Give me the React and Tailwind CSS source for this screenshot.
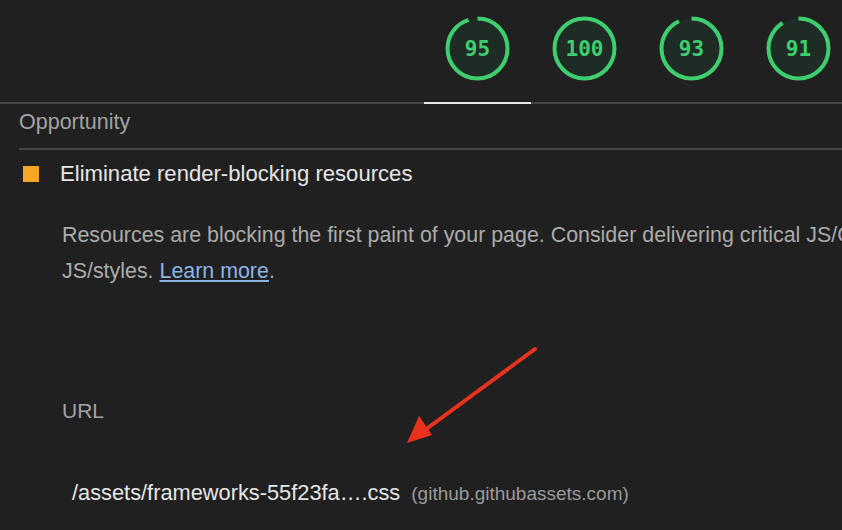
import React from "react";

const scores = [95, 100, 93, 91];

const Gauge = ({ value }) => {
  const r = 30;
  const c = 2 * Math.PI * r;
  const len = (value / 100) * c;
  return (
    <div className="relative w-[65px] h-[65px]">
      <svg width="65" height="65" viewBox="0 0 65 65" className="absolute inset-0">
        <circle cx="32.5" cy="32.5" r={r} fill="#0cce6b" fillOpacity="0.07" />
        <circle
          cx="32.5"
          cy="32.5"
          r={r}
          fill="none"
          stroke="#3fce6f"
          strokeWidth="4"
          strokeDasharray={`${len} ${c}`}
          transform="rotate(-90 32.5 32.5)"
        />
      </svg>
      <div className="absolute inset-0 flex items-center justify-center pt-[2px] font-['DejaVu_Sans_Mono',monospace] font-bold text-[21px] text-[#3fce6f]">
        {value}
      </div>
    </div>
  );
};

export default function App() {
  return (
    <div className="relative w-[842px] h-[530px] overflow-hidden bg-[#202020] font-['Liberation_Sans',Arial,sans-serif]">
      {/* Score tabs */}
      <div className="flex">
        <div className="w-[424px] shrink-0 h-[104px] border-b-2 border-[#444444]"></div>
        {scores.map((s, i) => (
          <div
            key={s + "-" + i}
            className={
              i === 0
                ? "w-[107px] shrink-0 h-[104px] flex justify-center pt-4 border-b-2 border-[#e8e8e8]"
                : "w-[107px] shrink-0 h-[104px] flex justify-center pt-4 border-b-2 border-[#444444]"
            }
          >
            <Gauge value={s} />
          </div>
        ))}
      </div>

      {/* Group header */}
      <div className="ml-[19px] border-b-2 border-[#444444] pt-[4px] pb-[12px]">
        <div className="text-[21.5px] leading-[28px] text-[#a3a3a3]">Opportunity</div>
      </div>

      {/* Audit */}
      <div className="flex items-center h-[48px]">
        <div className="ml-[23px] w-4 h-4 bg-[#f5a623]"></div>
        <div className="ml-[21px] text-[22.1px] text-[#e6e6e6] whitespace-nowrap">
          Eliminate render-blocking resources
        </div>
      </div>

      <div className="pl-[62px] mt-[19px] text-[21.4px] leading-[36px] text-[#ababab] whitespace-nowrap">
        <div>
          Resources are blocking the first paint of your page. Consider delivering critical JS/CSS inline and deferring all non-critical
        </div>
        <div>
          JS/styles.{" "}
          <a className="text-[#8ab4e8] underline underline-offset-2">Learn more</a>.
        </div>
      </div>

      <div className="pl-[62px] mt-[104px] text-[21px] leading-[36px] text-[#a3a3a3]">URL</div>

      <div className="pl-[72px] mt-[46px] flex items-baseline whitespace-nowrap leading-[36px]">
        <span className="text-[21.8px] text-[#e6e6e6]">/assets/frameworks-55f23fa….css</span>
        <span className="ml-[11px] text-[19px] text-[#9a9a9a]">(github.githubassets.com)</span>
      </div>

      {/* Annotation arrow */}
      <svg className="absolute left-0 top-0 pointer-events-none" width="842" height="530">
        <line x1="535" y1="349" x2="425" y2="430" stroke="#e8321e" strokeWidth="4" strokeLinecap="round" />
        <polygon points="407,443 419,416 432,435" fill="#e8321e" />
      </svg>
    </div>
  );
}
